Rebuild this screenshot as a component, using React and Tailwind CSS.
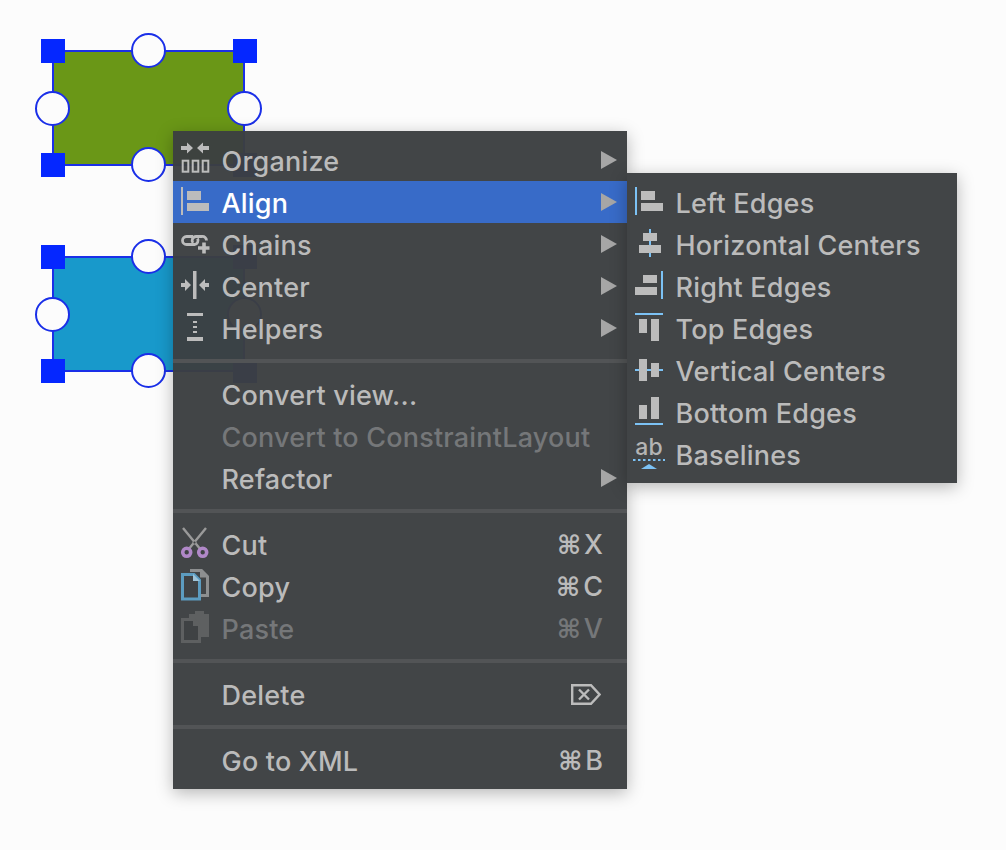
const G = "#bcbcbc";
const B = "#7cc2f5";

function Ico({ children, w = 32 }) {
  return (
    <svg width={w} height="42" viewBox={`0 0 ${w} 42`} className="block">
      {children}
    </svg>
  );
}

const R = ({ x, y, w, h, c = G }) => <rect x={x} y={y} width={w} height={h} fill={c} />;

const OrganizeI = () => (
  <Ico>
    <path d="M2 7h6V3.500l6 5.500-6 5.500V11H2zM30 7h-6V3.500L18 9l6 5.500V11h6z" fill={G} />
    <g fill="none" stroke={G} strokeWidth="2">
      <rect x="3.700" y="21.700" width="5.600" height="11" />
      <rect x="13.700" y="21.700" width="5.600" height="11" />
      <rect x="23.700" y="21.700" width="5.600" height="11" />
    </g>
  </Ico>
);
const AlignI = ({ c = G }) => (
  <Ico>
    <R x={2} y={6} w={2} h={28} c={c} />
    <R x={8} y={10} w={14} h={9} />
    <R x={8} y={22} w={22} h={8} />
  </Ico>
);
const ChainsI = () => (
  <Ico>
    <g fill="none" stroke={G} strokeWidth="2.800">
      <path d="M14 13.500H7.500a4 4 0 0 0 0 8h8a4 4 0 0 0 3-6" />
      <path d="M14 20a4 4 0 0 1 3-6.500h6a4 4 0 0 1 4.500 4" />
    </g>
    <path d="M23 18h4v5h4v4h-4v5h-4v-5h-5v-4h5z" fill="#3f4244" />
    <path d="M23.200 19.500h3.600v3.800h3.700v3.500h-3.700v3.700h-3.600v-3.700h-4.200v-3.500h4.200z" fill={G} />
  </Ico>
);
const CenterI = () => (
  <Ico>
    <R x={14} y={6} w={3.500} h={28} />
    <path d="M2 18h4v-4l6 6-6 6v-4H2zM30 18h-4v-4l-6 6 6 6v-4h4z" fill={G} />
  </Ico>
);
const HelpersI = () => (
  <Ico>
    <R x={8} y={6} w={16} h={3} />
    <R x={8} y={30} w={16} h={4} />
    <R x={14} y={14} w={4} h={2} />
    <R x={14} y={19} w={4} h={2} />
    <R x={14} y={24} w={4} h={2} />
  </Ico>
);
const CutI = () => (
  <Ico>
    <path d="M4 5l18 22M27 5L9 27" stroke="#9a9a9a" strokeWidth="2.400" fill="none" />
    <circle cx="15.500" cy="19.500" r="1.500" fill="#3f4244" stroke="#9a9a9a" />
    <circle cx="7.700" cy="29.300" r="4" fill="#3f4244" stroke="#b088c8" strokeWidth="3.600" />
    <circle cx="23.700" cy="29.300" r="4" fill="#3f4244" stroke="#b088c8" strokeWidth="3.600" />
  </Ico>
);
const CopyI = () => (
  <Ico>
    <path d="M11 5.500h11.500l6 6v19H22" fill="none" stroke="#8d8f90" strokeWidth="3" />
    <path d="M21 4.500l8 8h-8z" fill="#8d8f90" />
    <path d="M3.500 9.500H15l5.500 5.500v19H3.500z" fill="#3f4244" stroke="#5c9cc0" strokeWidth="3" />
    <path d="M14 9l7 7h-7z" fill="#9fc4d8" />
  </Ico>
);
const PasteI = () => (
  <Ico>
    <path d="M10 7h6V4h9v3h5v23H10z" fill="#5e6061" />
    <path d="M3.500 12.500H15l5.500 5.500v16.500H3.500z" fill="#3f4244" stroke="#5e6061" strokeWidth="3" />
    <path d="M14 12l7 7h-7z" fill="#5e6061" />
  </Ico>
);

const sub = [
  ["Left Edges", <AlignI c={B} />],
  ["Horizontal Centers", <Ico><R x={16} y={6} w={2} h={28} c={B} /><R x={10} y={10} w={14} h={8} /><R x={6} y={22} w={22} h={8} /></Ico>],
  ["Right Edges", <Ico><R x={10} y={10} w={14} h={8} /><R x={2} y={22} w={22} h={8} /><R x={28} y={6} w={2} h={28} c={B} /></Ico>],
  ["Top Edges", <Ico><R x={2} y={6} w={28} h={2} c={B} /><R x={6} y={12} w={8} h={14} /><R x={18} y={12} w={8} h={22} /></Ico>],
  ["Vertical Centers", <Ico><R x={2} y={20} w={28} h={2} c={B} /><R x={6} y={10} w={8} h={22} /><R x={18} y={14} w={8} h={14} /></Ico>],
  ["Bottom Edges", <Ico><R x={6} y={14} w={8} h={14} /><R x={18} y={6} w={8} h={22} /><R x={2} y={32} w={28} h={2} c={B} /></Ico>],
  ["Baselines", <Ico>
    <text x="16" y="22" textAnchor="middle" fontSize="23" fontWeight="500" fill="#b4b4b4" fontFamily="Inter, sans-serif">ab</text>
    <path d="M0 27h32" stroke={B} strokeWidth="2" strokeDasharray="2.500 2.500" />
    <path d="M16 31l8 5H8z" fill={B} />
  </Ico>],
];

function Arrow() {
  return (
    <svg width="16" height="18" viewBox="0 0 16 18" className="absolute right-[10px] top-[12px]">
      <path d="M0 0l16 9-16 9z" fill="#a6a6a6" />
    </svg>
  );
}

function Row({ icon, label, arrow, active, disabled, right }) {
  const color = active ? "text-white" : disabled ? "text-[#757779]" : "text-[#bbbbbb]";
  return (
    <div className={`relative flex h-[42px] items-center ${active ? "bg-[#386bc8]" : ""}`}>
      <div className="w-[48.500px] shrink-0 pl-[6px]">{icon}</div>
      <span className={`pt-[4px] text-[27px] font-medium leading-[42px] tracking-[0.2px] ${color}`}>{label}</span>
      {arrow && <Arrow />}
      {right && <div className={`ml-auto flex items-center pr-[24px] pt-[3px] text-[27px] ${color}`}>{right}</div>}
    </div>
  );
}

const Sep = () => <div className="my-[10px] h-[4px] bg-[#525456]" />;

const Key = ({ k }) => (
  <span className="flex items-center">
    <span className="mr-[3px] font-['DejaVu_Sans',sans-serif] text-[26px] font-bold">⌘</span>
    <span className="font-medium">{k}</span>
  </span>
);

const Square = ({ className }) => <div className={`absolute h-[24px] w-[24px] bg-[#0527ff] ${className}`} />;
const Circle = ({ className }) => (
  <div className={`absolute h-[35px] w-[35px] rounded-full border-2 border-[#1a2fe8] bg-[#fcfcfc] ${className}`} />
);

export default function App() {
  return (
    <div className="relative h-[850px] w-[1006px] overflow-hidden bg-[#fcfcfc] font-['Inter',sans-serif]">
      <div className="absolute left-[52px] top-[50px] h-[116px] w-[193px] border-2 border-[#1a2fe8] bg-[#6a9717]" />
      <Square className="left-[41px] top-[39px]" />
      <Square className="left-[233px] top-[39px]" />
      <Square className="left-[41px] top-[153px]" />
      <Square className="left-[233px] top-[153px]" />
      <Circle className="left-[131px] top-[33px]" />
      <Circle className="left-[35px] top-[91px]" />
      <Circle className="left-[227px] top-[91px]" />
      <Circle className="left-[131px] top-[147px]" />

      <div className="absolute left-[52px] top-[256px] h-[116px] w-[193px] border-2 border-[#1a2fe8] bg-[#1899cb]" />
      <Square className="left-[41px] top-[245px]" />
      <Square className="left-[233px] top-[245px]" />
      <Square className="left-[41px] top-[359px]" />
      <Square className="left-[233px] top-[359px]" />
      <Circle className="left-[131px] top-[239px]" />
      <Circle className="left-[35px] top-[297px]" />
      <Circle className="left-[227px] top-[297px]" />
      <Circle className="left-[131px] top-[353px]" />

      <div className="absolute left-[173px] top-[131px] w-[454px] bg-[rgba(60,63,65,0.97)] py-[8px] shadow-[0_4px_16px_rgba(0,0,0,0.28)]">
        <Row icon={<OrganizeI />} label="Organize" arrow />
        <Row icon={<AlignI />} label="Align" arrow active />
        <Row icon={<ChainsI />} label="Chains" arrow />
        <Row icon={<CenterI />} label="Center" arrow />
        <Row icon={<HelpersI />} label="Helpers" arrow />
        <Sep />
        <Row label="Convert view..." />
        <Row label="Convert to ConstraintLayout" disabled />
        <Row label="Refactor" arrow />
        <Sep />
        <Row icon={<CutI />} label="Cut" right={<Key k="X" />} />
        <Row icon={<CopyI />} label="Copy" right={<Key k="C" />} />
        <Row icon={<PasteI />} label="Paste" disabled right={<Key k="V" />} />
        <Sep />
        <Row
          label="Delete"
          right={
            <svg width="30" height="21" viewBox="0 0 30 21" className="-mt-[3px] mr-[2px]">
              <path d="M1.200 1.200h18.800l8.500 9.300-8.500 9.300H1.200z" fill="none" stroke={G} strokeWidth="2.400" />
              <path d="M8 5.500l10 10M18 5.500l-10 10" stroke={G} strokeWidth="2.400" />
            </svg>
          }
        />
        <Sep />
        <Row label="Go to XML" right={<Key k="B" />} />
      </div>

      <div className="absolute left-[627px] top-[173px] w-[330px] bg-[rgba(60,63,65,0.97)] py-[8px] shadow-[0_4px_16px_rgba(0,0,0,0.28)]">
        {sub.map(([label, icon]) => (
          <Row key={label} icon={icon} label={label} />
        ))}
      </div>
    </div>
  );
}
